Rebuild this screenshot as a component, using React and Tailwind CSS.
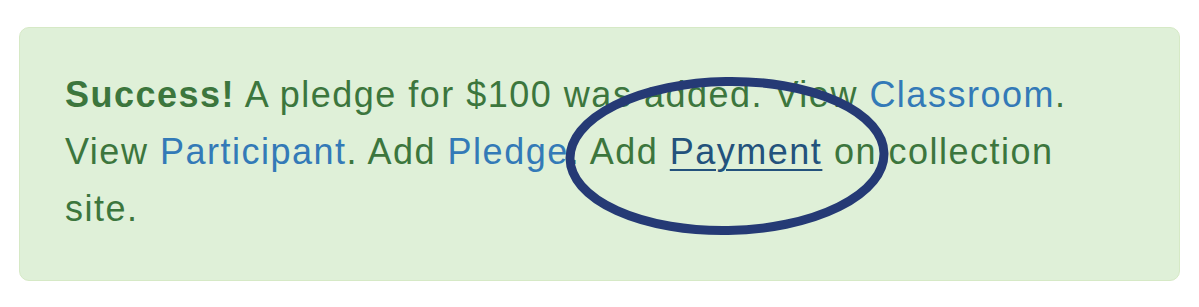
export default function App() {
  return (
    <main className="relative h-[307px] w-[1199px] bg-white px-[19px] pt-[27px] font-['Liberation_Sans',Arial,sans-serif]">
      <div className="rounded-[10px] border border-[#d6e9c6] bg-[#dff0d8] pl-[45px] pr-[60px] pt-[38px] pb-[43px] text-[36px] leading-[57px] tracking-[1.5px] text-[#3c763d]">
        <strong className="font-bold">Success!</strong> A pledge for $100 was
        added. View <a className="text-[#337ab7]">Classroom</a>. View{" "}
        <a className="text-[#337ab7]">Participant</a>. Add{" "}
        <a className="text-[#337ab7]">Pledge</a>. Add{" "}
        <a className="text-[#23527c] underline underline-offset-[5px] decoration-2">
          Payment
        </a>{" "}
        on collection site.
      </div>

      {/* annotation circle */}
      <svg
        className="pointer-events-none absolute left-[560px] top-[72px]"
        width="334"
        height="170"
        viewBox="0 0 334 170"
      >
        <ellipse
          cx="167"
          cy="84"
          rx="157"
          ry="74.5"
          fill="none"
          stroke="#253a75"
          strokeWidth="9"
          transform="rotate(-1 167 84)"
        />
      </svg>
    </main>
  );
}
